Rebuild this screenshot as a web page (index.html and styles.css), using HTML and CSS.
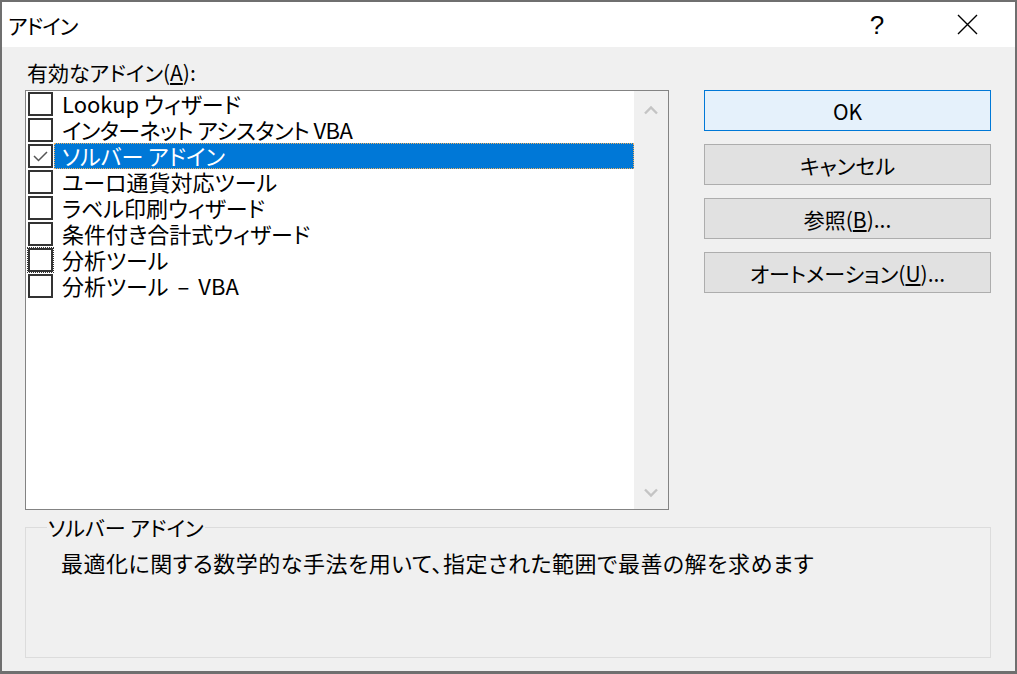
FILE: index.html
```html
<!DOCTYPE html>
<html lang="ja">
<head>
<meta charset="utf-8">
<title>アドイン</title>
<link rel="stylesheet" href="styles.css">
</head>
<body>
<div class="window">
  <div class="titlebar">
    <span class="title">アドイン</span>
    <span class="help">?</span>
    <span class="close">
      <svg width="21" height="21" viewBox="0 0 21 21"><path d="M1 1 L20 20 M20 1 L1 20" stroke="#000" stroke-width="1.4" fill="none"/></svg>
    </span>
  </div>
  <div class="content">
    <div class="top">
      <div class="left">
        <div class="caption">有効なアドイン(<u>A</u>):</div>
        <div class="listbox">
          <ul class="items">
            <li class="item"><span class="box"></span><span class="text">Lookup ウィザード</span></li>
            <li class="item"><span class="box"></span><span class="text narrow">インターネット アシスタント VBA</span></li>
            <li class="item selected"><span class="box"><svg width="21" height="20" viewBox="0 0 21 20"><path d="M4 10 L8.5 14.5 L17 6" stroke="#555" stroke-width="1.5" fill="none"/></svg></span><span class="text">ソルバー アドイン</span></li>
            <li class="item"><span class="box"></span><span class="text">ユーロ通貨対応ツール</span></li>
            <li class="item"><span class="box"></span><span class="text">ラベル印刷ウィザード</span></li>
            <li class="item"><span class="box"></span><span class="text">条件付き合計式ウィザード</span></li>
            <li class="item"><span class="box focus"></span><span class="text">分析ツール</span></li>
            <li class="item"><span class="box"></span><span class="text">分析ツール<span class="dash">–</span>VBA</span></li>
          </ul>
          <div class="scrollbar">
            <svg class="arrow" width="14" height="10" viewBox="0 0 14 10"><path d="M1 8.5 L7 2.5 L13 8.5" stroke="#c4c4c4" stroke-width="2.4" fill="none"/></svg>
            <svg class="arrow" width="14" height="10" viewBox="0 0 14 10"><path d="M1 1.5 L7 7.5 L13 1.5" stroke="#c4c4c4" stroke-width="2.4" fill="none"/></svg>
          </div>
        </div>
      </div>
      <div class="buttons">
        <div class="btn default">OK</div>
        <div class="btn">キャンセル</div>
        <div class="btn">参照(<u>B</u>)...</div>
        <div class="btn">オートメーション(<u>U</u>)...</div>
      </div>
    </div>
    <fieldset class="group">
      <legend>ソルバー アドイン</legend>
      <p class="desc">最適化に関する数学的な手法を用いて、指定された範囲で最善の解を求めます</p>
    </fieldset>
  </div>
</div>
</body>
</html>
```
FILE: styles.css
```css
* { box-sizing: border-box; }
html, body { margin: 0; }
body {
  background: #6f6f6f;
  padding: 2px;
  font-family: "Noto Sans CJK JP", "Noto Sans", sans-serif;
  font-feature-settings: "palt";
  color: #000;
}
.window {
  width: 1013px;
  height: 669px;
  background: #f0f0f0;
  display: flex;
  flex-direction: column;
}
.titlebar {
  height: 45px;
  background: #fff;
  display: flex;
  align-items: center;
}
.title {
  flex: 1;
  padding-left: 6px;
  font-size: 21px;
  line-height: 26px;
  letter-spacing: -1px;
}
.help {
  width: 40px;
  text-align: center;
  font-size: 26px;
  line-height: 28px;
  font-family: "Liberation Sans", sans-serif;
}
.close {
  width: 58px;
  margin-left: 41px;
  margin-right: 19px;
  display: flex;
  justify-content: center;
}
.close svg { display: block; }
.content {
  padding: 12px 24px 0 23px;
  display: flex;
  flex-direction: column;
}
.top {
  display: flex;
  gap: 35px;
}
.left {
  width: 644px;
}
.caption {
  font-size: 21px;
  line-height: 26px;
  padding-left: 2px;
  margin-bottom: 5px;
}
.listbox {
  height: 420px;
  border: 1px solid #838383;
  background: #fff;
  display: flex;
}
.items {
  list-style: none;
  margin: 0;
  padding: 0;
  flex: 1;
}
.item {
  display: flex;
  height: 26px;
  font-size: 22px;
}
.box {
  width: 25px;
  height: 24px;
  margin: 1px 1px 1px 2px;
  border: 2px solid #333;
  display: flex;
  align-items: center;
  justify-content: center;
}
.box.focus {
  outline: 1px dotted #333;
  outline-offset: 0;
}
.text {
  flex: 1;
  padding-left: 8px;
  white-space: nowrap;
  line-height: 24px;
}
.text.narrow {
  letter-spacing: -0.6px;
}
.dash {
  margin: 0 9px;
}
.item.selected .text {
  background: #0078d7;
  color: #fff;
  outline: 1px dotted #f0b060;
  outline-offset: -1px;
}
.scrollbar {
  width: 34px;
  background: #f0f0f0;
  display: flex;
  flex-direction: column;
  justify-content: space-between;
  align-items: center;
  padding: 14px 0 11px 0;
}
.arrow { display: block; }
.buttons {
  width: 287px;
  margin-top: 31px;
  display: flex;
  flex-direction: column;
  gap: 13px;
}
.btn {
  height: 41px;
  border: 1px solid #adadad;
  background: #e1e1e1;
  font-size: 21px;
  line-height: 26px;
  display: flex;
  align-items: center;
  justify-content: center;
}
.btn.default {
  border-color: #0078d7;
  background: #e5f1fb;
}
.group {
  margin: 4px 0 0 0;
  padding: 0;
  height: 144px;
  border: 1px solid #dcdcdc;
  min-width: 0;
}
.group legend {
  margin-left: 21px;
  padding: 0 1px;
  font-size: 21px;
  line-height: 26px;
}
.desc {
  margin: 9px 0 0 35px;
  font-size: 22px;
  line-height: 26px;
  letter-spacing: 0.5px;
}
```
